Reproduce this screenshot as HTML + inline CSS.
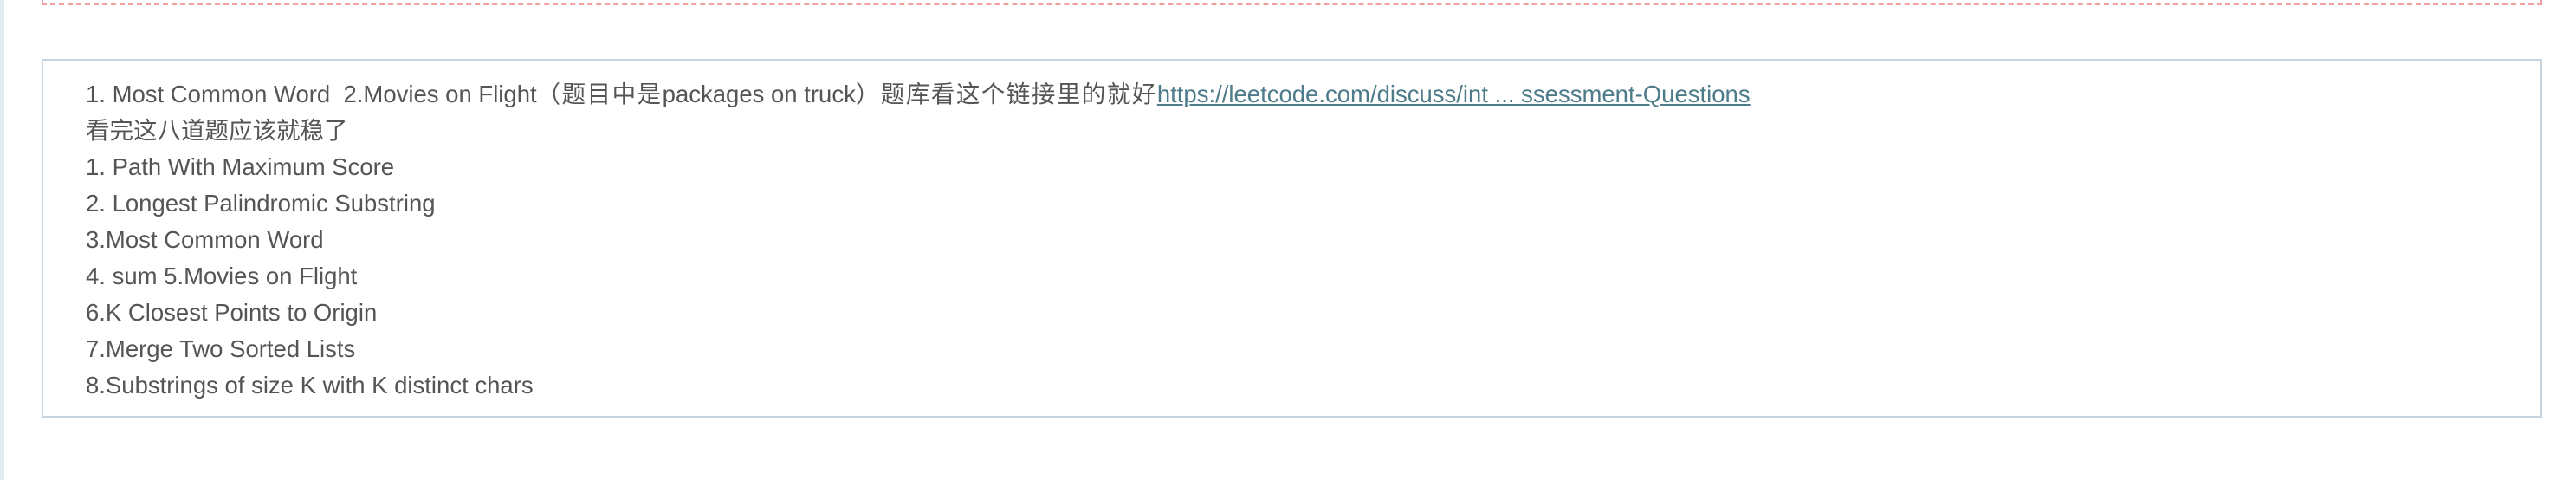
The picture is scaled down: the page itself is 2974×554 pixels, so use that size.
<!DOCTYPE html>
<html><head><meta charset="utf-8"><style>
html,body{margin:0;padding:0;background:#fff;width:2974px;height:554px;overflow:hidden;position:relative}
.lb{position:absolute;left:0;top:0;width:5px;height:554px;background:#dfeaf1}
.dash{position:absolute;left:48px;top:-20px;width:2883px;height:24px;border:2px dashed #f0a0a4;border-top:none}
.box{position:absolute;left:48px;top:68px;width:2883px;height:410px;border:2px solid #c6d4df;box-sizing:content-box}
.t{position:absolute;left:49px;top:18px;font-family:"Liberation Sans","Noto Sans CJK SC",sans-serif;font-size:27.5px;line-height:42px;color:#555;letter-spacing:0;white-space:nowrap}
.c{letter-spacing:1.5px}
a{color:#4d7b8a;text-decoration:underline}
</style></head><body>
<div class="lb"></div>
<div class="dash"></div>
<div class="box"><div class="t">
1. Most Common Word&nbsp; 2.Movies on Flight<span class="c">（题目中是</span>packages on truck<span class="c">）题库看这个链接里的就好</span><a>https://leetcode.com/discuss/int ... ssessment-Questions</a><br>
看完这八道题应该就稳了<br>
1. Path With Maximum Score<br>
2. Longest Palindromic Substring<br>
3.Most Common Word<br>
4. sum 5.Movies on Flight<br>
6.K Closest Points to Origin<br>
7.Merge Two Sorted Lists<br>
8.Substrings of size K with K distinct chars
</div></div>
</body></html>
